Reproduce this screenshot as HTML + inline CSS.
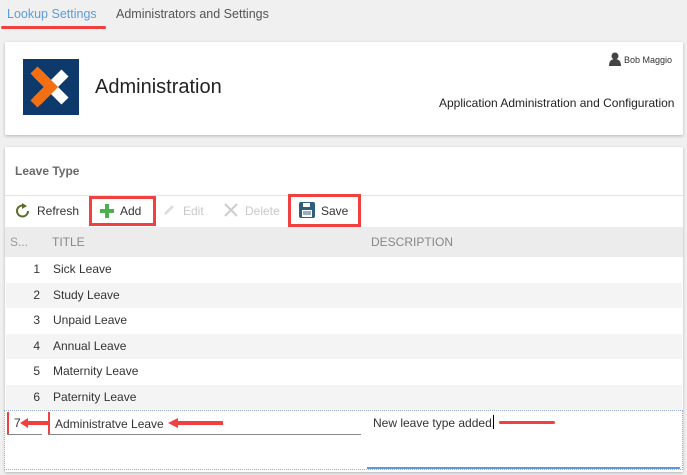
<!DOCTYPE html>
<html><head><style>
body{margin:0;width:687px;height:475px;background:#f0f0f0;font-family:"Liberation Sans",sans-serif;position:relative;overflow:hidden;font-size:12px;color:#333}
.a{position:absolute}
.card{position:absolute;background:#fff;box-shadow:0 1px 3px rgba(0,0,0,.25)}
.row{position:absolute;left:6px;width:676px;height:25.5px;line-height:25.5px}
.n{position:absolute;left:0;width:34px;text-align:right}
.t{position:absolute;left:47px}
.redbox{position:absolute;border:3px solid #f04040;box-sizing:border-box}
</style></head><body>
<div class="a" style="left:7px;top:7px;font-size:12.5px;color:#5b9be0">Lookup Settings</div>
<div class="a" style="left:116px;top:7px;font-size:12.5px;color:#555">Administrators and Settings</div>
<div class="a" style="left:1px;top:26px;width:105px;height:3px;background:#f04040;border-radius:2px"></div>

<div class="card" style="left:5px;top:42px;width:678px;height:93px">
 <div class="a" style="left:18px;top:17px;width:56px;height:56px;background:#0d3a6b">
  <svg width="56" height="56" viewBox="0 0 56 56"><path d="M14 14 L42 42 M42 14 L14 42" stroke="#fff" stroke-width="10"/><path d="M11 11 L28 28 L11 45" fill="none" stroke="#f36f12" stroke-width="10"/></svg>
 </div>
 <div class="a" style="left:90px;top:34px;font-size:20px;color:#222">Administration</div>
 <div class="a" style="left:604px;top:10px"><svg width="12" height="14" viewBox="0 0 12 14"><circle cx="6" cy="4" r="3.5" fill="#444"/><path d="M0 14 Q0 7 6 7 Q12 7 12 14Z" fill="#444"/></svg></div>
 <div class="a" style="left:619px;top:13px;font-size:9px;color:#333">Bob Maggio</div>
 <div class="a" style="left:434px;top:54px;font-size:12px;color:#222">Application Administration and Configuration</div>
</div>

<div class="card" style="left:5px;top:147px;width:678px;height:325px">
 <div class="a" style="left:10px;top:17px;font-size:12px;color:#444;font-weight:bold;opacity:.8">Leave Type</div>
 <div class="a" style="left:0;top:48px;width:678px;height:1px;background:#e2e2e2"></div>
 <svg class="a" style="left:10px;top:56px" width="16" height="16" viewBox="0 0 16 16"><path d="M13 8 A5.5 5.5 0 1 1 9 2.7" fill="none" stroke="#5a6b2a" stroke-width="2"/><path d="M7 0 L12 3 L7 6Z" fill="#5a6b2a"/></svg>
 <div class="a" style="left:32px;top:57px">Refresh</div>
 <svg class="a" style="left:94px;top:56px" width="16" height="16"><path d="M6 1h4v5h5v4h-5v5H6v-5H1V6h5z" fill="#4caf50"/></svg>
 <div class="a" style="left:115px;top:57px">Add</div>
 <svg class="a" style="left:157px;top:56px" width="14" height="14"><path d="M2 12 L3 9 L10 2 L12 4 L5 11Z" fill="#ddd"/></svg>
 <div class="a" style="left:178px;top:57px;color:#c8c8c8">Edit</div>
 <svg class="a" style="left:219px;top:56px" width="14" height="14"><path d="M1 1L13 13M13 1L1 13" stroke="#ccc" stroke-width="2"/></svg>
 <div class="a" style="left:240px;top:57px;color:#c8c8c8">Delete</div>
 <svg class="a" style="left:294px;top:55px" width="16" height="16"><rect x="0" y="0" width="16" height="16" rx="2" fill="#2f5f80"/><rect x="4" y="1" width="7" height="4" fill="#fff"/><rect x="3" y="8" width="10" height="7" fill="#fff"/><path d="M4 10h8M4 12h8" stroke="#2f5f80"/></svg>
 <div class="a" style="left:316px;top:57px">Save</div>
 <div class="a" style="left:0;top:80px;width:678px;height:30px;background:#ececec"></div>
 <div class="a" style="left:5px;top:88px;color:#999">S...</div>
 <div class="a" style="left:47px;top:88px;color:#888">TITLE</div>
 <div class="a" style="left:366px;top:88px;color:#888">DESCRIPTION</div>
</div>
<div class="redbox" style="left:89px;top:196px;width:67px;height:30px"></div>
<div class="redbox" style="left:288px;top:194px;width:73px;height:33px"></div>

<div class="row" style="top:257px;background:#fff"><span class="n">1</span><span class="t">Sick Leave</span></div>
<div class="row" style="top:282.5px;background:#f4f4f4"><span class="n">2</span><span class="t">Study Leave</span></div>
<div class="row" style="top:308px;background:#fff"><span class="n">3</span><span class="t">Unpaid Leave</span></div>
<div class="row" style="top:333.5px;background:#f4f4f4"><span class="n">4</span><span class="t">Annual Leave</span></div>
<div class="row" style="top:359px;background:#fff"><span class="n">5</span><span class="t">Maternity Leave</span></div>
<div class="row" style="top:384.5px;background:#f4f4f4"><span class="n">6</span><span class="t">Paternity Leave</span></div>

<div class="a" style="left:4px;top:410px;width:677px;height:58px;border:1px dotted #9ac;background:#fff"></div>
<div class="a" style="left:7px;top:412px;width:2px;height:22px;background:#f04040"></div>
<div class="a" style="left:7px;top:434px;width:35px;height:1px;background:#888"></div>
<div class="a" style="left:14px;top:416px">7</div>
<svg class="a" style="left:20px;top:418px" width="30" height="10"><path d="M0 5 L8 0 L8 3 L29 3 L29 7 L8 7 L8 10Z" fill="#f04040"/></svg>
<div class="a" style="left:48px;top:412px;width:2px;height:22px;background:#f04040"></div>
<div class="a" style="left:48px;top:434px;width:313px;height:1px;background:#888"></div>
<div class="a" style="left:55px;top:417px">Administratve Leave</div>
<svg class="a" style="left:168px;top:418px" width="56" height="10"><path d="M0 5 L10 0 L10 3 L55 3 L55 7 L10 7 L10 10Z" fill="#f04040"/></svg>
<div class="a" style="left:373px;top:416px">New leave type added.</div>
<div class="a" style="left:493px;top:415px;width:1px;height:14px;background:#000"></div>
<div class="a" style="left:499px;top:421px;width:56px;height:3px;background:#f04040;border-radius:2px"></div>
<div class="a" style="left:367px;top:467px;width:313px;height:2px;background:#5b9be0"></div>
</body></html>
